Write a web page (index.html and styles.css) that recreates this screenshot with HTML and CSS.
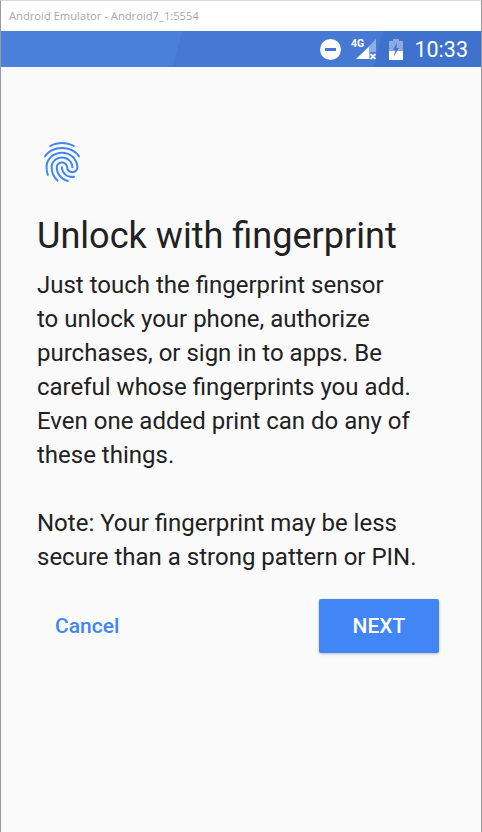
FILE: index.html
```html
<!DOCTYPE html>
<html lang="en">
<head>
<meta charset="utf-8">
<title>Android Emulator</title>
<link rel="stylesheet" href="styles.css">
</head>
<body>
<div class="window">
  <header class="titlebar">Android Emulator - Android7_1:5554</header>
  <div class="statusbar">
    <svg class="dnd" viewBox="0 0 21 21"><circle cx="10.500" cy="10.500" r="10.500" fill="#fff"/><rect x="5" y="9" width="11" height="3" fill="#4678d2"/></svg>
    <svg class="signal" viewBox="0 0 27 24">
      <path d="M6 22L26 2V15H20V22Z" fill="#fff" fill-opacity=".4"/>
      <path d="M6 22L19 10V22Z" fill="#fff"/>
      <path d="M20.500 17L25.500 22M25.500 17L20.500 22" stroke="#fff" stroke-width="1.800" fill="none"/>
      <text x="1" y="10" class="fourg">4G</text>
    </svg>
    <svg class="battery" viewBox="0 0 14 21">
      <path d="M4 0H10V2H14V21H0V2H4Z" fill="#fff" fill-opacity=".4"/>
      <rect x="0" y="12" width="14" height="9" fill="#fff"/>
      <path d="M8 3L4 11H6.500L4.500 18L10 9H7.500Z" fill="#4678d2"/>
    </svg>
    <span class="clock">10:33</span>
  </div>
  <main class="screen">
    <svg class="print" viewBox="0 0 24 24"><path fill="#4285f4" d="M17.81 4.47c-.08 0-.16-.02-.23-.06C15.66 3.42 14 3 12.01 3c-1.98 0-3.86.47-5.58 1.41-.24.13-.54.04-.68-.2-.13-.24-.04-.55.2-.68C7.82 2.52 9.86 2 12.01 2c2.13 0 3.99.47 6.03 1.52.25.13.34.43.21.67-.09.18-.26.28-.44.28zM3.5 9.72c-.1 0-.2-.03-.29-.09-.23-.16-.28-.47-.12-.7.99-1.4 2.25-2.5 3.75-3.27C9.98 4.04 14 4.03 17.15 5.65c1.5.77 2.76 1.86 3.75 3.25.16.22.11.54-.12.7-.23.16-.54.11-.7-.12-.9-1.26-2.04-2.25-3.39-2.94-2.87-1.47-6.54-1.47-9.4.01-1.36.7-2.5 1.7-3.4 2.96-.08.14-.23.21-.39.21zm6.25 12.07c-.13 0-.26-.05-.35-.15-.87-.87-1.34-1.43-2.01-2.64-.69-1.23-1.05-2.73-1.05-4.34 0-2.97 2.54-5.39 5.66-5.39s5.66 2.42 5.66 5.39c0 .28-.22.5-.5.5s-.5-.22-.5-.5c0-2.42-2.09-4.39-4.66-4.39-2.57 0-4.66 1.97-4.66 4.39 0 1.44.32 2.77.93 3.85.64 1.15 1.08 1.64 1.85 2.42.19.2.19.51 0 .71-.11.1-.24.15-.37.15zm7.17-1.85c-1.19 0-2.24-.3-3.1-.89-1.49-1.01-2.38-2.65-2.38-4.39 0-.28.22-.5.5-.5s.5.22.5.5c0 1.41.72 2.74 1.94 3.56.71.48 1.54.71 2.54.71.24 0 .64-.03 1.04-.1.27-.05.53.13.58.41.05.27-.13.53-.41.58-.57.11-1.07.12-1.21.12zM14.91 22c-.04 0-.09-.01-.13-.02-1.59-.44-2.63-1.03-3.72-2.1-1.4-1.39-2.17-3.24-2.17-5.22 0-1.62 1.38-2.94 3.08-2.94 1.7 0 3.08 1.32 3.08 2.94 0 1.07.93 1.94 2.08 1.94s2.08-.87 2.08-1.94c0-3.77-3.25-6.83-7.25-6.83-2.84 0-5.44 1.58-6.61 4.03-.39.81-.59 1.76-.59 2.8 0 .78.07 2.01.67 3.61.1.26-.03.55-.29.64-.26.1-.55-.04-.64-.29-.49-1.31-.73-2.61-.73-3.96 0-1.2.23-2.29.68-3.24 1.33-2.79 4.28-4.6 7.51-4.6 4.55 0 8.25 3.51 8.25 7.83 0 1.62-1.38 2.94-3.08 2.94s-3.08-1.32-3.08-2.94c0-1.07-.93-1.94-2.08-1.94s-2.08.87-2.08 1.94c0 1.71.66 3.31 1.87 4.51.95.94 1.86 1.46 3.27 1.85.27.07.42.35.35.61-.05.23-.26.38-.47.38z"/></svg>
    <h1 class="heading">Unlock with fingerprint</h1>
    <p class="body">Just touch the fingerprint sensor<br>to unlock your phone, authorize<br>purchases, or sign in to apps. Be<br>careful whose fingerprints you add.<br>Even one added print can do any of<br>these things.</p>
    <p class="body note">Note: Your fingerprint may be less<br>secure than a strong pattern or PIN.</p>
    <div class="actions">
      <span class="cancel">Cancel</span>
      <span class="next">NEXT</span>
    </div>
  </main>
</div>
</body>
</html>
```
FILE: styles.css
```css
* { box-sizing: border-box; }
html, body { margin: 0; height: 100%; }
body { font-family: Roboto, sans-serif; background: #fff; }
.window {
  width: 482px; height: 832px; display: flex; flex-direction: column;
  border-left: 1px solid #9a9a9a; border-right: 1px solid #9a9a9a;
  border-top: 1px solid #d8d8d8;
}
.titlebar {
  height: 30px; flex: none; background: #fff; color: #a9a9a9;
  font: 11.2px/30px "Open Sans", sans-serif; padding: 0 0 0 8px;
}
.statusbar {
  height: 36px; flex: none; display: flex; align-items: center;
  background: linear-gradient(105deg, #4a80d9 0 37%, #4579d4 37% 78%, #3e72cc 78% 100%);
  padding: 0 13px 0 0; justify-content: flex-end;
}
.dnd { width: 21px; height: 21px; margin-right: 9px; }
.signal { width: 27px; height: 24px; margin-right: 12px; }
.battery { width: 14px; height: 21px; margin-right: 11px; }
.fourg { font: 700 10.5px Roboto, sans-serif; fill: #fff; }
.clock { color: #fff; font-size: 21.5px; }
.screen { flex: 1; background: #fafafb; padding: 71px 0 0 36px; display: flex; flex-direction: column; }
.print { width: 48px; height: 48px; margin-left: 1px; display: block; }
.heading { margin: 28px 0 0; font-weight: 400; font-size: 36.1px; line-height: 44px; color: #212121; }
.body { margin: 10px 0 0; font-size: 24px; line-height: 34px; color: #212121; }
.note { margin-top: 34px; }
.actions { display: flex; justify-content: space-between; align-items: center; width: 402px; margin-top: 25px; }
.cancel { color: #4285f4; font-size: 21px; font-weight: 500; margin-left: 18px; }
.next {
  width: 120px; height: 54px; background: #4285f4; color: #fff; border-radius: 2px;
  font-size: 21px; font-weight: 500; display: flex; align-items: center; justify-content: center;
  box-shadow: 0 1px 3px rgba(0,0,0,.25);
}
```
